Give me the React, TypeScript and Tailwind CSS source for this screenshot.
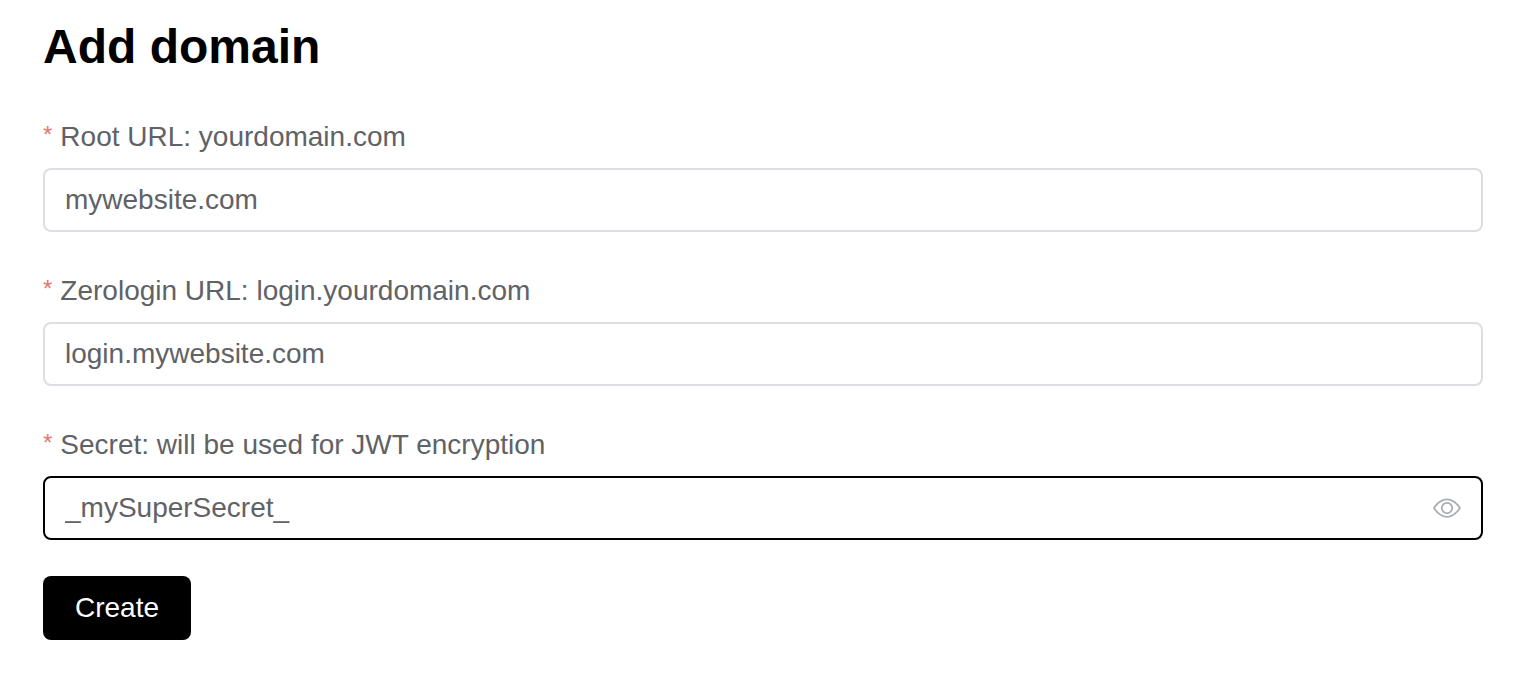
import { useState } from "react";

type FieldProps = {
  id: string;
  label: string;
  value: string;
  onChange: (value: string) => void;
};

function FieldLabel({ id, label }: { id: string; label: string }) {
  return (
    <label htmlFor={id} className="flex h-[46px] items-center text-[28px] leading-8 text-[#606266]">
      <span aria-hidden="true" className="mr-2 self-start text-2xl leading-[42px] text-[#e8756f]">*</span>
      {label}
    </label>
  );
}

const inputText = "min-w-0 flex-1 bg-transparent text-[28px] leading-8 text-[#606266] outline-none";

function TextField({ id, label, value, onChange }: FieldProps) {
  return (
    <div>
      <FieldLabel id={id} label={label} />
      <div className="mt-2 flex h-16 items-center rounded-lg border-2 border-[#dddde3] px-5">
        <input id={id} required value={value} onChange={(e) => onChange(e.target.value)} className={inputText} />
      </div>
    </div>
  );
}

function SecretField({ id, label, value, onChange }: FieldProps) {
  const [shown, setShown] = useState(true);
  return (
    <div>
      <FieldLabel id={id} label={label} />
      <div className="mt-2 flex h-16 items-center rounded-lg border-2 border-black px-5">
        <input
          id={id}
          required
          type={shown ? "text" : "password"}
          value={value}
          onChange={(e) => onChange(e.target.value)}
          className={inputText}
        />
        <button type="button" aria-label="Toggle secret visibility" onClick={() => setShown(!shown)} className="text-[#a8abb2]">
          <svg viewBox="0 0 1024 1024" className="size-7" fill="currentColor">
            <path d="M512 160c320 0 512 352 512 352S832 864 512 864 0 512 0 512s192-352 512-352zm0 64c-225.280 0-384.128 208.064-436.800 288 52.608 79.872 211.456 288 436.800 288 225.280 0 384.128-208.064 436.800-288-52.608-79.872-211.456-288-436.800-288zm0 64a224 224 0 1 1 0 448 224 224 0 0 1 0-448zm0 64a160.192 160.192 0 0 0-160 160c0 88.192 71.744 160 160 160s160-71.808 160-160-71.744-160-160-160z" />
          </svg>
        </button>
      </div>
    </div>
  );
}

export default function App() {
  const [root, setRoot] = useState("mywebsite.com");
  const [login, setLogin] = useState("login.mywebsite.com");
  const [secret, setSecret] = useState("_mySuperSecret_");

  return (
    <main className="bg-white pt-5 pr-[35px] pb-8 pl-[43px] font-['Liberation_Sans',Arial,sans-serif]">
      <h1 className="text-5xl leading-[54px] font-bold text-black">Add domain</h1>
      <form className="mt-10 flex flex-col gap-9" onSubmit={(e) => e.preventDefault()}>
        <TextField id="root-url" label="Root URL: yourdomain.com" value={root} onChange={setRoot} />
        <TextField id="login-url" label="Zerologin URL: login.yourdomain.com" value={login} onChange={setLogin} />
        <SecretField id="secret" label="Secret: will be used for JWT encryption" value={secret} onChange={setSecret} />
        <button type="submit" className="h-16 self-start rounded-lg bg-black px-8 text-[28px] leading-8 text-white">
          Create
        </button>
      </form>
    </main>
  );
}
